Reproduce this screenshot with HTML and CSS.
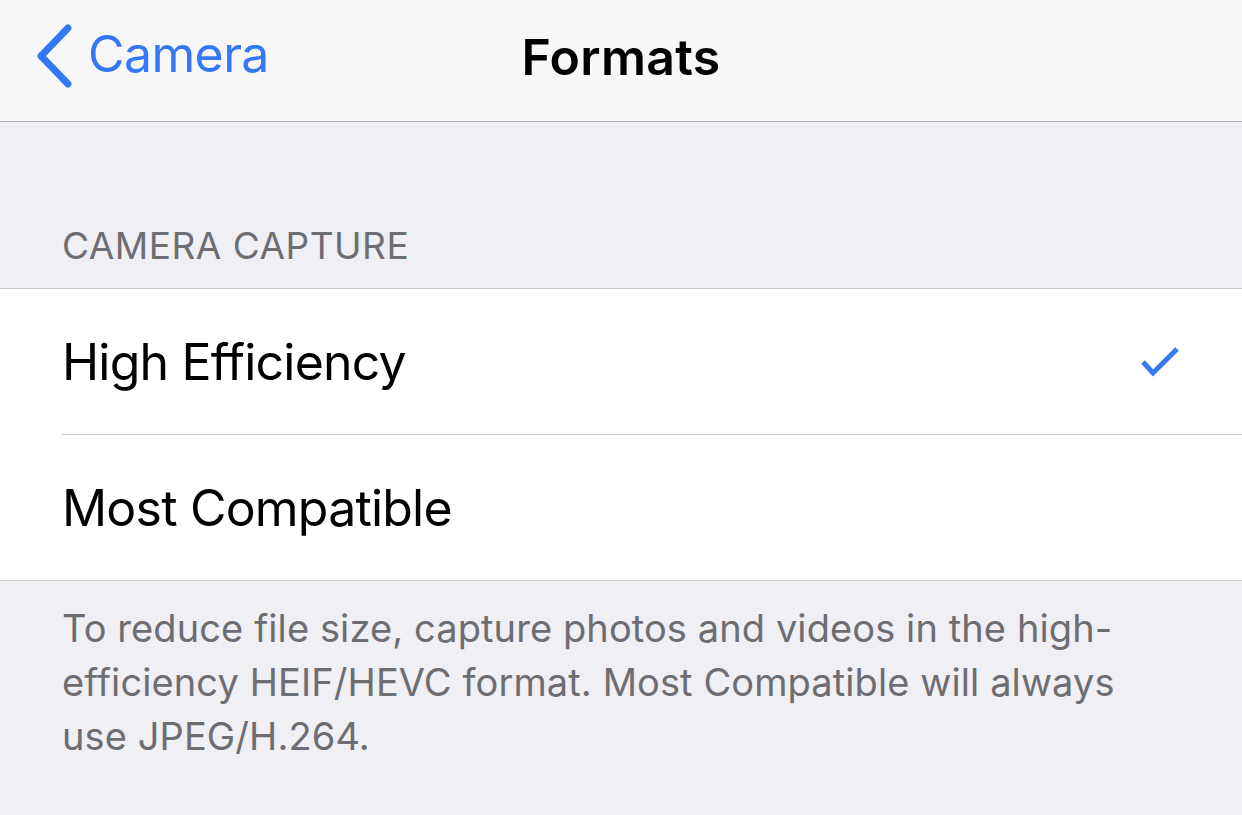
FILE: index.html
```html
<!DOCTYPE html>
<html lang="en">
<head>
    <meta charset="UTF-8">
    <meta name="viewport" content="width=device-width, initial-scale=1.0">
    <title>Formats</title>
    <link rel="stylesheet" href="styles.css">
</head>
<body>
    <header class="navbar">
        <a class="back" href="#">
            <svg class="chevron" width="40" height="64" viewBox="0 0 40 64">
                <path d="M34 4 L7 32 L34 60" fill="none" stroke="#3478f6" stroke-width="7" stroke-linecap="round" stroke-linejoin="round"/>
            </svg>
            <span>Camera</span>
        </a>
        <h1>Formats</h1>
    </header>

    <main>
        <div class="section-header">CAMERA CAPTURE</div>
        <ul class="group">
            <li class="row">
                <span>High Efficiency</span>
                <svg class="check" width="40" height="32" viewBox="0 0 40 32">
                    <path d="M3 16 L13 27 L37 3" fill="none" stroke="#3478f6" stroke-width="5"/>
                </svg>
            </li>
            <li class="row">
                <span>Most Compatible</span>
            </li>
        </ul>
        <p class="section-footer">To reduce file size, capture photos and videos in the high-efficiency HEIF/HEVC format. Most Compatible will always use JPEG/H.264.</p>
    </main>
</body>
</html>
```

FILE: styles.css
```css
body {
    font-family: Inter, "Noto Sans", sans-serif;
    background-color: #efeff4;
    color: #000;
    margin: 0;
    padding: 0;
}
.navbar {
    position: relative;
    height: 121px;
    background: #f7f7f8;
    border-bottom: 1px solid #b2b2b2;
    display: flex;
    align-items: center;
    justify-content: center;
}
.navbar h1 {
    margin: 0 0 8px;
    font-size: 50px;
    font-weight: 600;
    letter-spacing: 0.3px;
}
.back {
    position: absolute;
    left: 34px;
    top: 24px;
    display: flex;
    align-items: center;
    color: #3478f6;
    text-decoration: none;
    font-size: 50px;
    letter-spacing: -0.6px;
}
.back span {
    margin-left: 14px;
    margin-bottom: 4px;
}
.section-header {
    padding: 101px 62px 20px;
    font-size: 37px;
    color: #6d6d72;
    letter-spacing: 0.5px;
}
.group {
    list-style: none;
    margin: 0;
    padding: 0 0 0 62px;
    background: #fff;
    border-top: 1px solid #c8c7cc;
    border-bottom: 1px solid #c8c7cc;
}
.row {
    height: 145px;
    display: flex;
    align-items: center;
    justify-content: space-between;
    padding-right: 62px;
    font-size: 50px;
    letter-spacing: -0.8px;
}
.row + .row {
    border-top: 1px solid #c8c7cc;
}
.check {
    margin-top: 0;
}
.section-footer {
    margin: 0;
    padding: 20px 62px;
    max-width: 1080px;
    font-size: 38px;
    line-height: 54px;
    letter-spacing: 0.1px;
    color: #6d6d72;
}
```
